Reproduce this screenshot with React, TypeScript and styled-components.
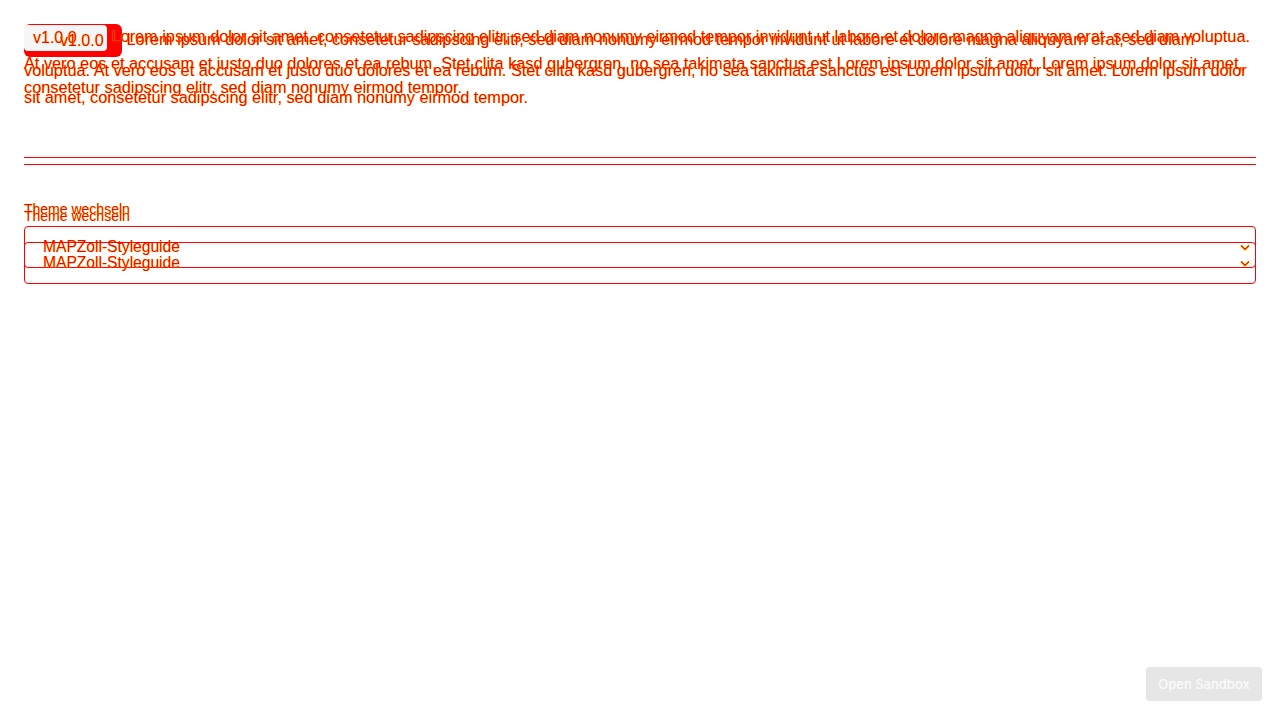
import React from "react";
import styled, { createGlobalStyle, css } from "styled-components";

type Variant = "a" | "b";
type Pass = "bg" | "fg";

const RED = "#ff0000";
const YEL = "#ffff00";

const GlobalStyle = createGlobalStyle`
  html, body { margin: 0; padding: 0; background: #ffffff; }
  body { font-family: "Liberation Sans", Arial, sans-serif; }
`;

const Canvas = styled.div`
  display: grid;
  grid-template-columns: 1280px;
  grid-template-rows: 720px;
  width: 1280px;
  height: 720px;
  overflow: hidden;
  & > * { grid-area: 1 / 1; min-width: 0; }
`;

const fgText = css<{ $pass: Pass }>`
  color: ${(p) => (p.$pass === "fg" ? RED : "transparent")};
  text-shadow: ${(p) => (p.$pass === "fg" ? `0 0 0.7px ${YEL}` : "none")};
`;

const Page = styled.div<{ $v: Variant; $pass: Pass }>`
  box-sizing: border-box;
  width: 1280px;
  padding: 24px 24px 0;
  display: flex;
  flex-direction: column;
  ${fgText}
`;

const Intro = styled.p<{ $v: Variant }>`
  margin: 0;
  font-size: 16.3px;
  white-space: nowrap;
  line-height: ${(p) => (p.$v === "a" ? "24.5px" : "26.5px")};
`;

const Badge = styled.span<{ $v: Variant; $pass: Pass }>`
  display: inline-block;
  vertical-align: middle;
  box-sizing: border-box;
  height: ${(p) => (p.$v === "a" ? "26px" : "33px")};
  line-height: ${(p) => (p.$v === "a" ? "26px" : "33px")};
  width: ${(p) => (p.$v === "a" ? "83px" : "98px")};
  padding-left: ${(p) => (p.$v === "a" ? "9px" : "36px")};
  border-radius: ${(p) => (p.$v === "a" ? "4px" : "6px")};
  font-size: 16px;
  background: ${(p) =>
    p.$pass === "fg" ? "transparent" : p.$v === "a" ? "#f6f6f6" : RED};
`;

const Rule = styled.div<{ $v: Variant; $pass: Pass }>`
  height: 1px;
  margin-top: ${(p) => (p.$v === "a" ? "57.3px" : "54px")};
  background: ${(p) => (p.$pass === "fg" ? RED : "transparent")};
`;

const Label = styled.label<{ $v: Variant }>`
  display: block;
  margin-top: 41px;
  font-size: 14px;
  line-height: 20px;
`;

const SelectBox = styled.div<{ $v: Variant; $pass: Pass }>`
  box-sizing: border-box;
  margin-top: ${(p) => (p.$v === "a" ? "7px" : "16px")};
  height: 42px;
  display: flex;
  align-items: center;
  padding: 0 5px 0 18px;
  border: 1px solid ${(p) => (p.$pass === "fg" ? RED : "transparent")};
  border-radius: 4px;
  font-size: 15.6px;
`;

const Value = styled.span`
  flex: 1;
`;

const Chevron = styled.svg<{ $pass: Pass }>`
  width: 10px;
  height: 7px;
  display: ${(p) => (p.$pass === "fg" ? "block" : "none")};
`;

const SandboxButton = styled.button`
  position: fixed;
  right: 18px;
  bottom: 19px;
  width: 116px;
  height: 34px;
  border: 0;
  border-radius: 4px;
  background: #e6e6e6;
  color: #fbfbfb;
  font-family: Inter, "Liberation Sans", Arial, sans-serif;
  font-size: 13px;
  font-weight: 500;
  padding: 0;
`;

const LINES: Record<Variant, string[]> = {
  a: [
    "Lorem ipsum dolor sit amet, consetetur sadipscing elitr, sed diam nonumy eirmod tempor invidunt ut labore et dolore magna aliquyam erat, sed diam voluptua.",
    "At vero eos et accusam et justo duo dolores et ea rebum. Stet clita kasd gubergren, no sea takimata sanctus est Lorem ipsum dolor sit amet. Lorem ipsum dolor sit amet,",
    "consetetur sadipscing elitr, sed diam nonumy eirmod tempor.",
  ],
  b: [
    "Lorem ipsum dolor sit amet, consetetur sadipscing elitr, sed diam nonumy eirmod tempor invidunt ut labore et dolore magna aliquyam erat, sed diam",
    "voluptua. At vero eos et accusam et justo duo dolores et ea rebum. Stet clita kasd gubergren, no sea takimata sanctus est Lorem ipsum dolor sit amet. Lorem ipsum dolor",
    "sit amet, consetetur sadipscing elitr, sed diam nonumy eirmod tempor.",
  ],
};

function Layer({ v, pass }: { v: Variant; pass: Pass }) {
  const [l1, l2, l3] = LINES[v];
  return (
    <Page $v={v} $pass={pass}>
      <Intro $v={v}>
        <Badge $v={v} $pass={pass}>v1.0.0</Badge> {l1}
        <br />
        {l2}
        <br />
        {l3}
      </Intro>
      <Rule $v={v} $pass={pass} />
      <Label $v={v}>Theme wechseln</Label>
      <SelectBox $v={v} $pass={pass}>
        <Value>MAPZoll-Styleguide</Value>
        <Chevron $pass={pass} viewBox="0 0 10 7">
          <polyline points="1,1.5 5,5.5 9,1.5" fill="none" stroke={YEL} strokeWidth="2.2" />
          <polyline points="1,1.5 5,5.5 9,1.5" fill="none" stroke={RED} strokeWidth="1.2" />
        </Chevron>
      </SelectBox>
    </Page>
  );
}

export default function App() {
  return (
    <>
      <GlobalStyle />
      <Canvas>
        <Layer v="b" pass="bg" />
        <Layer v="a" pass="bg" />
        <Layer v="a" pass="fg" />
        <Layer v="b" pass="fg" />
      </Canvas>
      <SandboxButton>Open Sandbox</SandboxButton>
    </>
  );
}
